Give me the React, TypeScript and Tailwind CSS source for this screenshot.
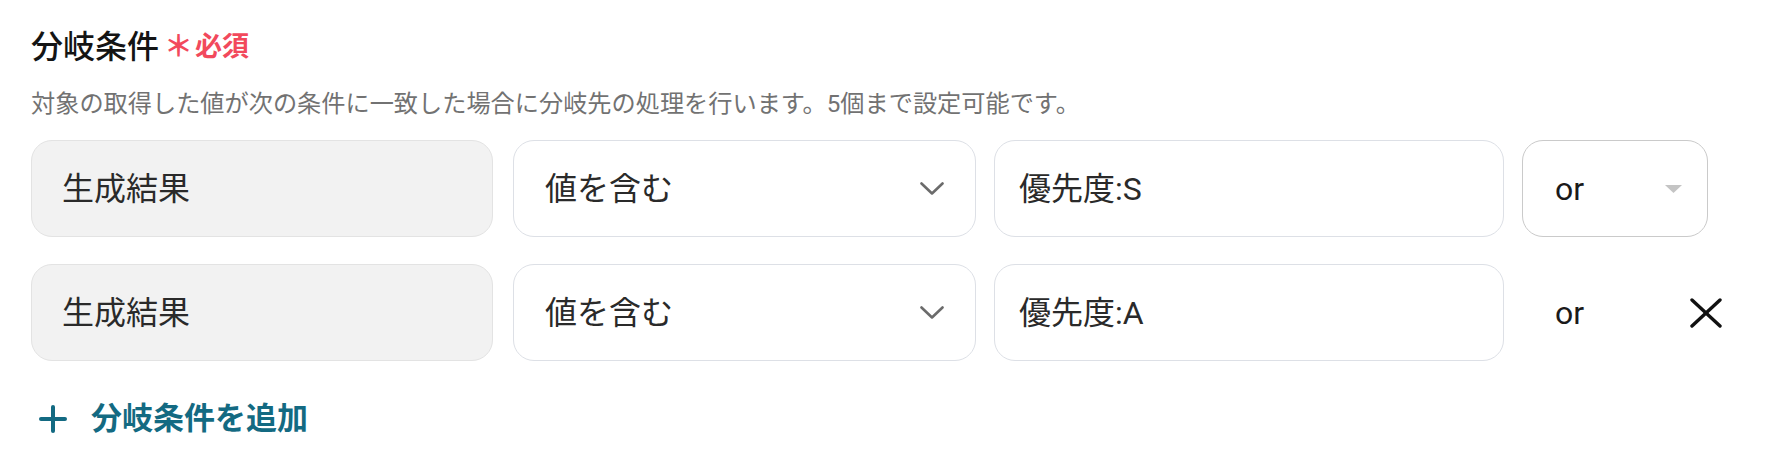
import React from "react";

const FONT = '"Roboto", "Noto Sans CJK JP", sans-serif';

function ChevronIcon() {
  return (
    <svg width="24" height="14" viewBox="0 0 24 14" fill="none">
      <polyline
        points="1.5,1.5 12,11.5 22.5,1.5"
        stroke="#6b6b6b"
        strokeWidth="2.6"
        strokeLinecap="round"
        strokeLinejoin="round"
      />
    </svg>
  );
}

function TriangleIcon() {
  return (
    <svg width="17" height="8" viewBox="0 0 17 8">
      <polygon points="0,0 17,0 8.5,8" fill="#c4c4c4" />
    </svg>
  );
}

function CloseIcon() {
  return (
    <svg width="32" height="30" viewBox="0 0 32 30" fill="none">
      <line x1="2" y1="2" x2="30" y2="28" stroke="#111" strokeWidth="3.4" strokeLinecap="round" />
      <line x1="30" y1="2" x2="2" y2="28" stroke="#111" strokeWidth="3.4" strokeLinecap="round" />
    </svg>
  );
}

function PlusIcon() {
  return (
    <svg width="28" height="28" viewBox="0 0 28 28" fill="none">
      <line x1="14" y1="2" x2="14" y2="26" stroke="#136a82" strokeWidth="4" strokeLinecap="round" />
      <line x1="2" y1="14" x2="26" y2="14" stroke="#136a82" strokeWidth="4" strokeLinecap="round" />
    </svg>
  );
}

interface ConditionRowProps {
  value: string;
  first: boolean;
}

function ConditionRow({ value, first }: ConditionRowProps) {
  return (
    <div className="flex items-center">
      <div className="flex h-[97px] w-[462px] shrink-0 items-center rounded-[21px] border-[1.5px] border-[#e3e3e3] bg-[#f2f2f2] pl-[30px] text-[32px] text-[#2a2a2a]">
        生成結果
      </div>
      <div className="ml-[20px] flex h-[97px] w-[463px] shrink-0 items-center justify-between rounded-[21px] border-[1.5px] border-[#dde0e6] bg-white pl-[31px] pr-[31px] text-[32px] text-[#2a2a2a]">
        <span>値を含む</span>
        <ChevronIcon />
      </div>
      <div className="ml-[18px] flex h-[97px] w-[510px] shrink-0 items-center rounded-[21px] border-[1.5px] border-[#dde0e6] bg-white pl-[24px] text-[32px] text-[#2a2a2a]">
        {value}
      </div>
      {first ? (
        <div className="ml-[18px] flex h-[97px] w-[186px] shrink-0 items-center justify-between rounded-[21px] border-[1.5px] border-[#cacaca] bg-white pl-[32px] pr-[25px] text-[32px] text-[#1a1a1a]">
          <span>or</span>
          <TriangleIcon />
        </div>
      ) : (
        <div className="ml-[18px] flex h-[97px] shrink-0 items-center">
          <span className="w-[150px] pl-[33px] text-[32px] text-[#1a1a1a]">or</span>
          <button type="button" className="ml-[18px] flex items-center" aria-label="削除">
            <CloseIcon />
          </button>
        </div>
      )}
    </div>
  );
}

export default function App() {
  return (
    <div className="min-h-[462px] bg-white pl-[31px] pt-[27px]" style={{ fontFamily: FONT }}>
      <div className="flex items-center leading-[40px]">
        <span className="text-[32px] font-medium text-[#141414]">分岐条件</span>
        <span className="ml-[5px] text-[29px] font-bold text-[#f2495c]">＊</span>
        <span className="ml-[2px] text-[27px] font-bold text-[#f2495c]">必須</span>
      </div>
      <p className="mt-[21px] text-[24.2px] leading-[32px] text-[#727272]">
        対象の取得した値が次の条件に一致した場合に分岐先の処理を行います。5個まで設定可能です。
      </p>
      <div className="mt-[20px] flex flex-col gap-[27px]">
        <ConditionRow value="優先度:S" first />
        <ConditionRow value="優先度:A" first={false} />
      </div>
      <button
        type="button"
        className="mt-[38px] flex items-center leading-[40px] text-[31px] font-bold text-[#136a82]"
        style={{ fontFamily: FONT }}
      >
        <span className="ml-[8px]">
          <PlusIcon />
        </span>
        <span className="ml-[24px]">分岐条件を追加</span>
      </button>
    </div>
  );
}
